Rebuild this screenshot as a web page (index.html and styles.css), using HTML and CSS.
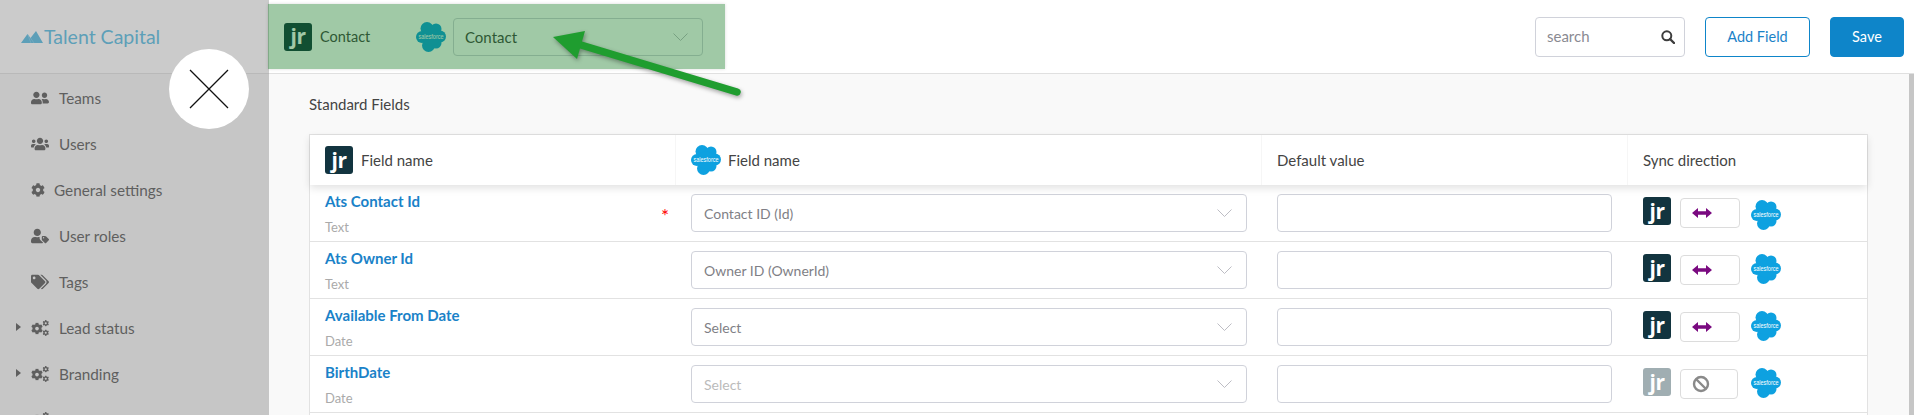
FILE: index.html
```html
<!DOCTYPE html>
<html lang="en">
    <head>
        <title>Field mapping</title>
        <meta charset="utf-8">
        <meta name="viewport" content="width=device-width, initial-scale=1">
        <link rel="stylesheet" href="styles.css">
    </head>
    <body>
        <!-- icons used more than once -->
        <svg class="sprite" aria-hidden="true">
            <symbol id="cloud" viewBox="0 0 30 30">
                <g fill="#0ea1e0">
                    <circle cx="11" cy="6.500" r="6.500"/>
                    <circle cx="20" cy="7" r="5.500"/>
                    <circle cx="24" cy="14.500" r="6"/>
                    <circle cx="6" cy="15" r="6"/>
                    <circle cx="12.500" cy="23.500" r="6.500"/>
                    <circle cx="20" cy="21" r="5.500"/>
                    <circle cx="15" cy="15" r="9"/>
                </g>
                <text x="15" y="17.200" text-anchor="middle" textLength="25" lengthAdjust="spacingAndGlyphs" class="cloud-text">salesforce</text>
            </symbol>
            <symbol id="chevron" viewBox="0 0 15 8">
                <path d="M0.5 0.5 L7.5 7.5 L14.5 0.5" fill="none" stroke="#bdbdc4" stroke-width="1"/>
            </symbol>
            <symbol id="cog" viewBox="0 0 512 512">
                <path d="M487.4 315.7l-42.6-24.6c4.3-23.2 4.3-47 0-70.2l42.6-24.6c4.9-2.8 7.1-8.6 5.5-14-11.1-35.6-30-67.8-54.7-94.6-3.8-4.1-10-5.1-14.8-2.3L380.8 110c-17.9-15.4-38.5-27.3-60.8-35.1V25.8c0-5.6-3.9-10.5-9.4-11.7-36.7-8.2-74.3-7.8-109.2 0-5.5 1.2-9.4 6.1-9.4 11.7V75c-22.2 7.9-42.8 19.8-60.8 35.1L88.7 85.5c-4.9-2.8-11-1.9-14.8 2.3-24.7 26.7-43.6 58.9-54.7 94.6-1.7 5.4.6 11.2 5.5 14L67.3 221c-4.3 23.2-4.3 47 0 70.2l-42.6 24.6c-4.9 2.8-7.1 8.6-5.5 14 11.1 35.6 30 67.8 54.7 94.6 3.8 4.1 10 5.1 14.8 2.3l42.6-24.6c17.9 15.4 38.5 27.3 60.8 35.1v49.2c0 5.6 3.9 10.5 9.4 11.7 36.7 8.2 74.3 7.8 109.2 0 5.5-1.2 9.4-6.1 9.4-11.7v-49.2c22.2-7.9 42.8-19.8 60.8-35.1l42.6 24.6c4.9 2.8 11 1.9 14.8-2.3 24.7-26.7 43.6-58.9 54.7-94.6 1.5-5.5-.7-11.3-5.6-14.1zM256 336c-44.1 0-80-35.9-80-80s35.9-80 80-80 80 35.9 80 80-35.9 80-80 80z"/>
            </symbol>
            <symbol id="cogs" viewBox="0 0 18 16">
                <use href="#cog" x="0" y="2.5" width="12" height="12"/>
                <use href="#cog" x="11.5" y="0" width="6.5" height="6.5"/>
                <use href="#cog" x="11.5" y="9.5" width="6.5" height="6.5"/>
            </symbol>
            <symbol id="swap" viewBox="0 0 20 12">
                <path d="M0 6 L6 1 V4.200 H14 V1 L20 6 L14 11 V7.800 H6 V11 Z" fill="#7a0a80"/>
            </symbol>
        </svg>

        <aside class="sidebar">
            <div class="brand">
                <svg class="brand-mark" viewBox="0 0 22 12"><path d="M0 12 L6.500 3 L9.500 7 L15 0 L22 12 Z" fill="#5d9fb8"/><path d="M9.500 7 L13 12 M6.500 3 L10 12" stroke="#8ab5c6" stroke-width="0.500"/></svg>
                <span>Talent Capital</span>
            </div>
            <nav class="menu">
                <a class="menu-item">
                    <svg class="menu-icon" viewBox="0 0 640 512"><path d="M192 256c61.9 0 112-50.1 112-112S253.9 32 192 32 80 82.1 80 144s50.1 112 112 112zm76.8 32h-8.3c-20.8 10-43.9 16-68.5 16s-47.6-6-68.5-16h-8.3C51.6 288 0 339.6 0 403.2V432c0 26.5 21.5 48 48 48h288c26.5 0 48-21.5 48-48v-28.8c0-63.6-51.6-115.2-115.2-115.2zM480 256c53 0 96-43 96-96s-43-96-96-96-96 43-96 96 43 96 96 96zm48 32h-3.8c-13.9 4.8-28.6 8-44.2 8s-30.3-3.2-44.2-8H432c-20.4 0-39.2 5.9-55.7 15.4 24.4 26.3 39.7 61.2 39.7 99.8v38.4c0 2.2-.5 4.3-.6 6.4H592c26.5 0 48-21.5 48-48 0-61.9-50.1-112-112-112z"/></svg>
                    Teams
                </a>
                <a class="menu-item">
                    <svg class="menu-icon" viewBox="0 0 640 512"><path d="M96 224c35.3 0 64-28.7 64-64s-28.7-64-64-64-64 28.7-64 64 28.7 64 64 64zm448 0c35.3 0 64-28.7 64-64s-28.7-64-64-64-64 28.7-64 64 28.7 64 64 64zm32 32h-64c-17.6 0-33.5 7.1-45.1 18.6 40.3 22.1 68.9 62 75.1 109.4h66c17.7 0 32-14.3 32-32v-32c0-35.3-28.7-64-64-64zm-256 0c61.9 0 112-50.1 112-112S381.9 32 320 32 208 82.1 208 144s50.1 112 112 112zm76.8 32h-8.3c-20.8 10-43.9 16-68.5 16s-47.6-6-68.5-16h-8.3C179.6 288 128 339.6 128 403.2V432c0 26.5 21.5 48 48 48h288c26.5 0 48-21.5 48-48v-28.8c0-63.6-51.6-115.2-115.2-115.2zm-223.7-13.4C161.5 263.1 145.6 256 128 256H64c-35.3 0-64 28.7-64 64v32c0 17.7 14.3 32 32 32h65.9c6.3-47.4 34.9-87.3 75.2-109.4z"/></svg>
                    Users
                </a>
                <a class="menu-item menu-item-tight">
                    <svg class="menu-icon menu-icon-square"><use href="#cog"/></svg>
                    General settings
                </a>
                <a class="menu-item">
                    <svg class="menu-icon" viewBox="0 0 640 512"><path d="M224 256c70.7 0 128-57.3 128-128S294.7 0 224 0 96 57.3 96 128s57.3 128 128 128zM134.400 288C60.200 288 0 348.200 0 422.400V464c0 26.500 21.500 48 48 48h352c13 0 24.700-5.200 33.300-13.500L330 395c-15-15-24-36-24-57v-49c-8-.7-16-1-24-1h-17c-22 10-46 16-41 16s-19-6-41-16zM630.600 364.900l-90.300-90.200c-12-12-28.300-18.700-45.300-18.700h-79.300c-17.700 0-32 14.300-32 32v79.200c0 17 6.700 33.200 18.700 45.200l90.300 90.200c12.500 12.500 32.800 12.500 45.300 0l92.500-92.500c12.600-12.500 12.600-32.700.1-45.200zM447.800 343.900c-13.300 0-24-10.700-24-24s10.700-24 24-24 24 10.700 24 24c0 13.200-10.700 24-24 24z"/></svg>
                    User roles
                </a>
                <a class="menu-item">
                    <svg class="menu-icon" viewBox="0 0 640 512"><path d="M497.941 225.941L286.059 14.059A48 48 0 0 0 252.118 0H48C21.490 0 0 21.490 0 48v204.118a48 48 0 0 0 14.059 33.941l211.882 211.882c18.744 18.745 49.136 18.746 67.882 0l204.118-204.118c18.745-18.745 18.745-49.137 0-67.882zM112 160c-26.510 0-48-21.490-48-48s21.490-48 48-48 48 21.490 48 48-21.490 48-48 48zm513.941 133.823L421.823 497.941c-18.745 18.745-49.137 18.745-67.882 0l-.36-.36L527.640 323.522c16.999-16.999 26.360-39.600 26.360-63.640s-9.362-46.641-26.360-63.640L331.397 0h48.721a48 48 0 0 1 33.941 14.059l211.882 211.882c18.745 18.745 18.745 49.137 0 67.882z"/></svg>
                    Tags
                </a>
                <a class="menu-item menu-item-parent">
                    <svg class="menu-icon"><use href="#cogs"/></svg>
                    Lead status
                </a>
                <a class="menu-item menu-item-parent">
                    <svg class="menu-icon"><use href="#cogs"/></svg>
                    Branding
                </a>
                <a class="menu-item menu-item-parent">
                    <svg class="menu-icon"><use href="#cogs"/></svg>
                </a>
            </nav>
        </aside>

        <main class="main">
            <header class="topbar">
                <div class="object-map">
                    <span class="jr">jr</span>
                    <span class="object-name">Contact</span>
                    <svg class="cloud"><use href="#cloud"/></svg>
                    <div class="select select-object">
                        <span>Contact</span>
                        <svg class="chevron"><use href="#chevron"/></svg>
                    </div>
                </div>
                <div class="actions">
                    <div class="search">
                        <span>search</span>
                        <svg class="search-icon" viewBox="0 0 14 14"><circle cx="5.800" cy="5.800" r="4.500" fill="none" stroke="#3d3d3d" stroke-width="2"/><path d="M9 9 L13 13" stroke="#3d3d3d" stroke-width="2.400" stroke-linecap="round"/></svg>
                    </div>
                    <button class="btn btn-outline">Add Field</button>
                    <button class="btn btn-primary">Save</button>
                </div>
            </header>

            <div class="body-wrap">
                <section class="page">
                    <h2 class="section-title">Standard Fields</h2>
                    <div class="table">
                        <div class="row row-head">
                            <div class="cell cell-head"><span class="jr">jr</span> Field name</div>
                            <div class="cell cell-head"><svg class="cloud"><use href="#cloud"/></svg> Field name</div>
                            <div class="cell cell-head">Default value</div>
                            <div class="cell cell-head">Sync direction</div>
                        </div>

                        <div class="row">
                            <div class="cell cell-field">
                                <div>
                                    <div class="field-name">Ats Contact Id</div>
                                    <div class="field-type">Text</div>
                                </div>
                                <span class="required">*</span>
                            </div>
                            <div class="cell"><div class="select"><span>Contact ID (Id)</span><svg class="chevron"><use href="#chevron"/></svg></div></div>
                            <div class="cell"><div class="input"></div></div>
                            <div class="cell cell-sync">
                                <span class="jr">jr</span>
                                <div class="toggle"><svg class="swap"><use href="#swap"/></svg></div>
                                <svg class="cloud cloud-low"><use href="#cloud"/></svg>
                            </div>
                        </div>

                        <div class="row">
                            <div class="cell cell-field">
                                <div>
                                    <div class="field-name">Ats Owner Id</div>
                                    <div class="field-type">Text</div>
                                </div>
                            </div>
                            <div class="cell"><div class="select"><span>Owner ID (OwnerId)</span><svg class="chevron"><use href="#chevron"/></svg></div></div>
                            <div class="cell"><div class="input"></div></div>
                            <div class="cell cell-sync">
                                <span class="jr">jr</span>
                                <div class="toggle"><svg class="swap"><use href="#swap"/></svg></div>
                                <svg class="cloud"><use href="#cloud"/></svg>
                            </div>
                        </div>

                        <div class="row">
                            <div class="cell cell-field">
                                <div>
                                    <div class="field-name">Available From Date</div>
                                    <div class="field-type">Date</div>
                                </div>
                            </div>
                            <div class="cell"><div class="select"><span>Select</span><svg class="chevron"><use href="#chevron"/></svg></div></div>
                            <div class="cell"><div class="input"></div></div>
                            <div class="cell cell-sync">
                                <span class="jr">jr</span>
                                <div class="toggle"><svg class="swap"><use href="#swap"/></svg></div>
                                <svg class="cloud"><use href="#cloud"/></svg>
                            </div>
                        </div>

                        <div class="row">
                            <div class="cell cell-field">
                                <div>
                                    <div class="field-name">BirthDate</div>
                                    <div class="field-type">Date</div>
                                </div>
                            </div>
                            <div class="cell"><div class="select select-muted"><span>Select</span><svg class="chevron"><use href="#chevron"/></svg></div></div>
                            <div class="cell"><div class="input"></div></div>
                            <div class="cell cell-sync">
                                <span class="jr jr-off">jr</span>
                                <div class="toggle toggle-off">
                                    <svg class="ban" viewBox="0 0 18 18"><circle cx="9" cy="9" r="7" fill="none" stroke="#8a8a8a" stroke-width="2.400"/><path d="M4 4 L14 14" stroke="#8a8a8a" stroke-width="2.400"/></svg>
                                </div>
                                <svg class="cloud"><use href="#cloud"/></svg>
                            </div>
                        </div>
                    </div>
                </section>
                <div class="scrollbar"></div>
            </div>
        </main>

        <!-- tutorial overlay on top of the page -->
        <div class="highlight"></div>
        <svg class="pointer" viewBox="540 25 210 80">
            <path d="M581 45 L737 92" stroke="#1f9d2f" stroke-width="7.500" stroke-linecap="round" fill="none"/>
            <path d="M553 37 L585 31 L577 59 Z" fill="#1f9d2f"/>
        </svg>
        <button class="close-tour">
            <svg viewBox="0 0 40 40"><path d="M1 1 L39 39 M39 1 L1 39" stroke="#111" stroke-width="1.300"/></svg>
        </button>
    </body>
</html>
```

FILE: styles.css
```css
html, body {
    margin: 0;
    padding: 0;
    height: 100%;
    overflow: hidden;
}

body {
    display: flex;
    position: relative;
    font-family: "Lato", "Open Sans", sans-serif;
    color: #444;
    background-color: #fff;
}

.sprite {
    display: none;
}

/* sidebar */
.sidebar {
    width: 269px;
    flex-shrink: 0;
    overflow: hidden;
    background-color: #c6c6c6;
}

.brand {
    height: 73px;
    display: flex;
    align-items: center;
    gap: 1px;
    padding-left: 21px;
    font-size: 19.5px;
    color: #5d9fb8;
    background-color: #cbcbcb;
    border-bottom: 1px solid #b9b9b9;
}

.brand-mark {
    width: 22px;
    height: 12px;
    margin-top: 1px;
}

.menu {
    display: flex;
    flex-direction: column;
    padding-top: 1px;
}

.menu-item {
    height: 46px;
    flex-shrink: 0;
    display: flex;
    align-items: center;
    gap: 10px;
    padding-left: 31px;
    position: relative;
    font-size: 15.300px;
    color: #5f5f5f;
}

.menu-item-tight {
    gap: 9px;
}

.menu-item-parent::before {
    content: "";
    position: absolute;
    left: 16px;
    top: 18px;
    border-left: 5px solid #5f5f5f;
    border-top: 4.5px solid transparent;
    border-bottom: 4.5px solid transparent;
}

.menu-icon {
    width: 18px;
    height: 16px;
    fill: #5f5f5f;
}

.menu-icon-square {
    width: 14px;
    height: 14px;
}

/* top bar */
.main {
    flex: 1;
    min-width: 0;
    display: flex;
    flex-direction: column;
}

.topbar {
    height: 73px;
    flex-shrink: 0;
    display: flex;
    align-items: center;
    justify-content: space-between;
    padding: 0 10px 0 15px;
    border-bottom: 1px solid #e0e0e0;
}

.object-map {
    display: flex;
    align-items: center;
}

.object-name {
    width: 96px;
    margin-left: 8px;
    font-size: 14.500px;
}

.jr {
    width: 28px;
    height: 28px;
    flex-shrink: 0;
    display: inline-flex;
    align-items: center;
    justify-content: center;
    border-radius: 3px;
    background-color: #12343f;
    color: #fff;
    font-family: "Open Sans", sans-serif;
    font-size: 21px;
    font-weight: 700;
    letter-spacing: -0.5px;
    line-height: 1;
}

.jr-off {
    background-color: #a0aeb2;
}

.cloud {
    width: 30px;
    height: 30px;
    flex-shrink: 0;
}

.cloud-text {
    font-family: "Liberation Sans", sans-serif;
    font-size: 6.500px;
    fill: #fff;
}

.select, .input {
    height: 38px;
    box-sizing: border-box;
    border: 1px solid #d0d2da;
    border-radius: 4px;
    background-color: #fff;
}

.select {
    display: flex;
    align-items: center;
    justify-content: space-between;
    padding: 0 14px 0 12px;
    width: 556px;
    font-size: 14px;
    color: #7f7f86;
}

.select-object {
    width: 250px;
    margin-left: 7px;
    padding-left: 11px;
    font-size: 15px;
    color: #444;
}

.select-muted {
    color: #bbb;
}

.chevron {
    width: 15px;
    height: 8px;
}

.input {
    width: 335px;
}

.actions {
    display: flex;
    align-items: center;
    gap: 20px;
}

.search {
    width: 150px;
    height: 40px;
    box-sizing: border-box;
    display: flex;
    align-items: center;
    justify-content: space-between;
    padding: 0 9px 2px 11px;
    border: 1px solid #d0d2da;
    border-radius: 4px;
    font-size: 15px;
    color: #8a8a92;
}

.search-icon {
    width: 14px;
    height: 14px;
    margin-top: 2px;
}

.btn {
    height: 40px;
    box-sizing: border-box;
    border-radius: 4px;
    font-family: inherit;
    font-size: 14.500px;
    border: 1px solid #0e85c9;
}

.btn-outline {
    width: 105px;
    color: #1a82c8;
    background-color: #fff;
}

.btn-primary {
    width: 74px;
    color: #fff;
    background-color: #0e85c9;
}

/* content */
.body-wrap {
    flex: 1;
    min-height: 0;
    overflow: hidden;
    display: flex;
    background-color: #f9f9f9;
}

.page {
    flex: 1;
    min-width: 0;
    padding: 21px 41px 0 40px;
}

.scrollbar {
    width: 5px;
    background-color: #c6c6c6;
}

.section-title {
    margin: 0 0 21px;
    font-size: 15px;
    font-weight: 400;
    line-height: 18px;
    color: #444;
}

/* the table carries on below the fold */
.table {
    padding-bottom: 20px;
    background-color: #fff;
    border: 1px solid #e2e2e2;
}

.row {
    display: grid;
    grid-template-columns: 365px 586px 366px 1fr;
    height: 57px;
    box-sizing: border-box;
    border-bottom: 1px solid #e2e2e2;
}

.row-head {
    height: 50px;
    border-bottom: 0;
    position: relative;
    box-shadow: 0 3px 8px rgba(0, 0, 0, 0.12);
}

.cell {
    padding: 9px 0 0 16px;
    min-width: 0;
}

.cell-head {
    padding: 0 0 0 15px;
    display: flex;
    align-items: center;
    gap: 8px;
    font-size: 15px;
    color: #444;
    border-left: 1px solid #f6f6f6;
}

.cell-head .cloud {
    margin-right: -1px;
}

.cell-head:first-child {
    border-left: 0;
}

.cell-field {
    padding: 6px 6px 0 15px;
    display: flex;
    justify-content: space-between;
}

.field-name {
    font-size: 15px;
    font-weight: 700;
    line-height: 20px;
    color: #1a82c8;
}

.field-type {
    margin-top: 7px;
    font-size: 13px;
    line-height: 18px;
    color: #aaa;
}

.required {
    align-self: flex-start;
    margin-top: 17px;
    font-size: 19px;
    line-height: 16px;
    color: #f00;
}

.cell-sync {
    padding-top: 12px;
    display: flex;
    align-items: flex-start;
}

.toggle {
    width: 60px;
    height: 30px;
    box-sizing: border-box;
    margin: 1px 11px 0 9px;
    display: flex;
    align-items: center;
    padding-left: 11px;
    border: 1px solid #dcdcdc;
    border-radius: 4px;
}

.toggle-off {
    width: 58px;
    margin-right: 13px;
}

.swap {
    width: 20px;
    height: 12px;
}

.ban {
    width: 18px;
    height: 18px;
}

.cloud-low {
    margin-top: 3px;
}

/* tutorial overlay */
.highlight {
    position: absolute;
    left: 268px;
    top: 4px;
    width: 457px;
    height: 65px;
    background-color: rgba(17, 120, 32, 0.4);
    box-shadow: 0 0 3px rgba(0, 0, 0, 0.15);
}

.pointer {
    position: absolute;
    left: 540px;
    top: 25px;
    width: 210px;
    height: 80px;
    filter: drop-shadow(1px 2px 2px rgba(0, 0, 0, 0.35));
}

.close-tour {
    position: absolute;
    left: 169px;
    top: 49px;
    width: 80px;
    height: 80px;
    padding: 20px;
    border: 0;
    border-radius: 50%;
    background-color: #fff;
}

.close-tour svg {
    display: block;
    width: 40px;
    height: 40px;
}
```
